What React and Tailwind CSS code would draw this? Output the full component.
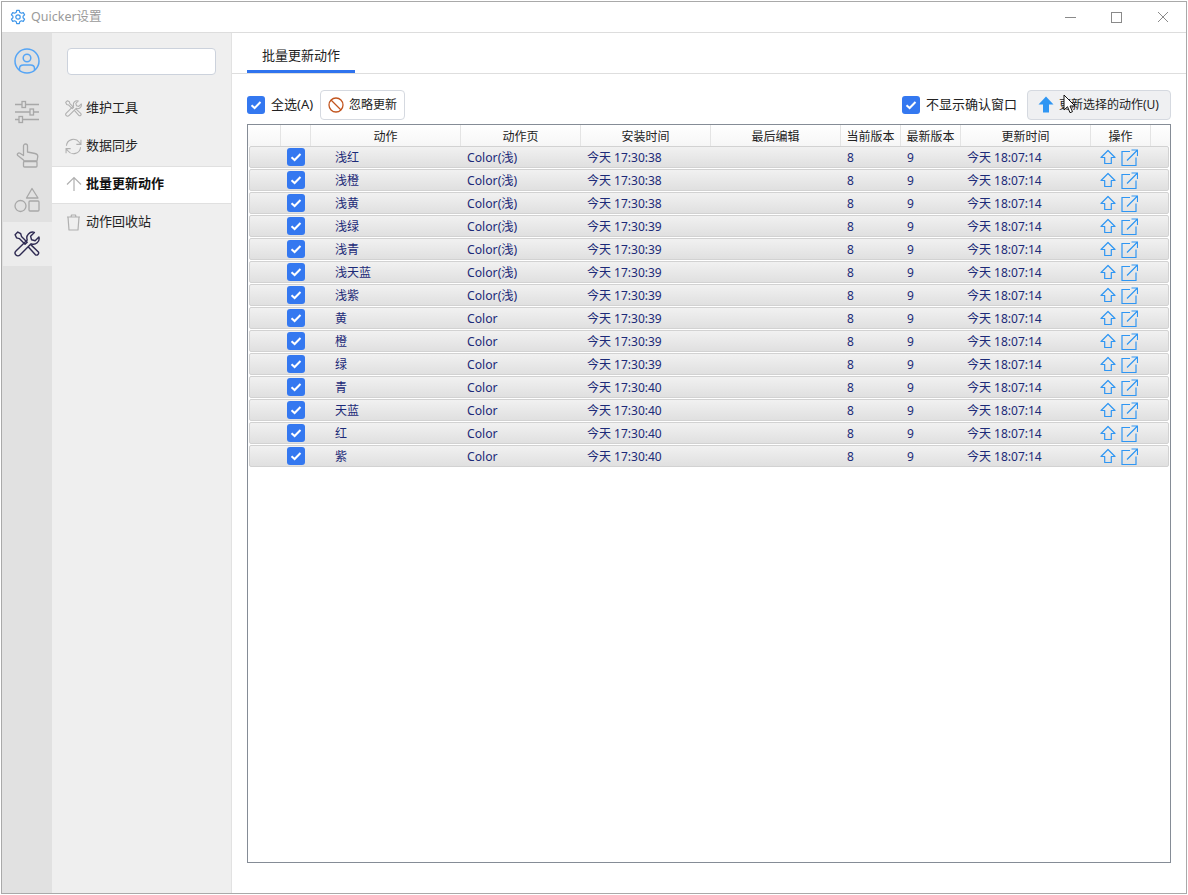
import React from "react";

const FONT = "font-['Noto_Sans','Noto_Sans_CJK_SC',sans-serif]";

const rows = [
  ["浅红", "Color(浅)", "今天 17:30:38"],
  ["浅橙", "Color(浅)", "今天 17:30:38"],
  ["浅黄", "Color(浅)", "今天 17:30:38"],
  ["浅绿", "Color(浅)", "今天 17:30:39"],
  ["浅青", "Color(浅)", "今天 17:30:39"],
  ["浅天蓝", "Color(浅)", "今天 17:30:39"],
  ["浅紫", "Color(浅)", "今天 17:30:39"],
  ["黄", "Color", "今天 17:30:39"],
  ["橙", "Color", "今天 17:30:39"],
  ["绿", "Color", "今天 17:30:39"],
  ["青", "Color", "今天 17:30:40"],
  ["天蓝", "Color", "今天 17:30:40"],
  ["红", "Color", "今天 17:30:40"],
  ["紫", "Color", "今天 17:30:40"],
];

const Check = () => (
  <span className="flex h-[18px] w-[18px] shrink-0 items-center justify-center rounded-[3px] bg-[#3478f0]">
    <svg width="12" height="10" viewBox="0 0 12 10" fill="none">
      <path d="M1.5 5.2 4.6 8 10.5 2" stroke="#fff" strokeWidth="2" />
    </svg>
  </span>
);

const Wrench = ({ color, size, w = 1.3 }) => (
  <svg width={size} height={size} viewBox="0 0 24 24" fill="none" stroke={color} strokeWidth={w} strokeLinejoin="round" strokeLinecap="round">
    <path d="M1 3.500 3.500 1l2.700 1.500.7 2.500 5.300 5.300-2 2-5.300-5.300-2.500-.7Z" />
    <path d="M23 5.500 19.500 9l-3.300-.9-.9-3.300L18.800 1.300a5.300 5.300 0 0 0-6.600 6.900L1.800 18.500a2.600 2.600 0 0 0 3.700 3.700l10.300-10.400a5.300 5.300 0 0 0 7.200-6.300Z" />
    <path d="m13.500 15 6.300 7a2 2 0 0 0 2.700-2.700l-6.800-6.500" />
  </svg>
);

const RailItem = ({ children, active, className = "" }) => (
  <div className={`flex h-[44px] items-center justify-center ${active ? "w-[49px] bg-[#ececec]" : "w-[50px]"} ${className}`}>{children}</div>
);

const NavItem = ({ icon, label, active }) => (
  <div className={`flex h-[38px] items-center pl-[11px] text-[13px] ${active ? "-mb-px mt-px border-y border-[#e0e0e0] bg-white pb-[2px] font-semibold text-[#111]" : "text-[#222]"}`}>
    <span className="flex w-[21px] justify-center">{icon}</span>
    <span className="ml-[2px]">{label}</span>
  </div>
);

const headers = [
  ["", "w-[33px]"],
  ["", "w-[30px]"],
  ["动作", "w-[150px]"],
  ["动作页", "w-[120px]"],
  ["安装时间", "w-[130px]"],
  ["最后编辑", "w-[130px]"],
  ["当前版本", "w-[60px]"],
  ["最新版本", "w-[60px]"],
  ["更新时间", "w-[130px]"],
  ["操作", "w-[60px]"],
];

const Row = ({ r }) => (
  <div className="flex h-[22px] items-center rounded-[2px] border border-[#d2d2d2] bg-gradient-to-b from-[#f1f1f1] to-[#e0e0e0] text-[12px] leading-none text-[#1c2a78]">
    <span className="w-[37px]" />
    <Check />
    <span className="ml-[30px] w-[132px] pt-[2px]">{r[0]}</span>
    <span className="w-[120px] pt-[2px] text-[12.2px]">{r[1]}</span>
    <span className="w-[260px] pt-[2px]">{r[2]}</span>
    <span className="w-[60px] pt-[2px]">8</span>
    <span className="w-[60px] pt-[2px]">9</span>
    <span className="w-[133px] pt-[2px]">今天 18:07:14</span>
    <span className="flex items-center gap-[5px]">
      <svg width="16" height="16" viewBox="0 0 16 16" fill="none" stroke="#2f96f3" strokeWidth="1.2" strokeLinejoin="round">
        <path d="M8 1.500 15 8.500h-3.700v6H4.700v-6H1Z" />
      </svg>
      <svg width="17" height="17" viewBox="0 0 17 17" fill="none" stroke="#2f96f3" strokeWidth="1.2">
        <path d="M9 2.500H1v14h14V8.500" />
        <path d="M6 11.500 16 1.500M10.500 1h6v6" />
      </svg>
    </span>
  </div>
);

export default function App() {
  return (
    <div className={`h-[895px] w-[1188px] overflow-hidden bg-white ${FONT}`}>
      <div className="ml-px mt-px flex h-[893px] w-[1186px] flex-col border border-[#a9a9a9] bg-white">
        <div className="flex h-[31px] shrink-0 items-center border-b border-[#dddddd] pl-[8px]">
          <svg width="16" height="16" viewBox="0 0 24 24" fill="none" stroke="#3f97ea" strokeWidth="1.8" strokeLinejoin="round">
            <path d="M10 2h4l.6 3 2.400 1.400 2.900-1 2 3.400-2.300 2v2.400l2.300 2-2 3.400-2.900-1-2.400 1.400-.6 3h-4l-.6-3L7 17.600l-2.900 1-2-3.400 2.300-2v-2.400l-2.300-2 2-3.400 2.900 1L9.400 5Z" />
            <circle cx="12" cy="12" r="3.300" />
          </svg>
          <span className="ml-[5px] text-[12.5px] text-[#9a9a9a]">Quicker设置</span>
          <div className="ml-auto flex items-center">
            <span className="mr-[35px] h-px w-[11px] bg-[#8a8a8a]" />
            <span className="mr-[35px] h-[11px] w-[11px] border border-[#8a8a8a]" />
            <svg className="mr-[17px]" width="12" height="12" viewBox="0 0 12 12" stroke="#8a8a8a" strokeWidth="1"><path d="M1 1l10 10M11 1 1 11" /></svg>
          </div>
        </div>

        <div className="flex min-h-0 flex-1">
          <div className="flex w-[50px] shrink-0 flex-col items-center bg-[#e1e1e1] pt-[6px]">
            <RailItem>
              <svg width="26" height="26" viewBox="0 0 26 26" fill="none" stroke="#56a5f5" strokeWidth="1.5">
                <circle cx="13" cy="13" r="12" />
                <circle cx="13" cy="10" r="3.800" />
                <path d="M5.500 22v-1.500c0-2.500 2-3.500 4-3.500h7c2 0 4 1 4 3.500V22" />
              </svg>
            </RailItem>
            <RailItem className="mt-[7px]">
              <svg width="26" height="24" viewBox="0 0 26 24" fill="none" stroke="#a8a8a8" strokeWidth="1.3">
                <path d="M1 4.500h24M1 12h24M1 19.500h24" />
                <rect x="8" y="1.500" width="3.500" height="6" fill="#e1e1e1" />
                <rect x="16" y="9" width="3.500" height="6" fill="#e1e1e1" />
                <rect x="5" y="16.500" width="3.500" height="6" fill="#e1e1e1" />
              </svg>
            </RailItem>
            <RailItem>
              <svg className="-mt-[2px]" width="23" height="25" viewBox="0 0 23 25" fill="none" stroke="#a8a8a8" strokeWidth="1.3" strokeLinejoin="round">
                <path d="M7.500 17 1.800 12.500c-1.300-1.500.7-3.300 2.200-2.300L7.500 12.500V3a2 2 0 0 1 4 0v6l7.500 1.500c1.800.4 3 1.700 2.700 3.500L21 18H8Z" />
                <rect x="7.500" y="18.500" width="13.500" height="5.500" rx="1" />
              </svg>
            </RailItem>
            <RailItem>
              <svg width="26" height="26" viewBox="0 0 26 26" fill="none" stroke="#a8a8a8" strokeWidth="1.3" strokeLinejoin="round">
                <path d="M18 1.500 24 11H12.500Z" />
                <circle cx="6.500" cy="19" r="5.500" />
                <rect x="15" y="14" width="10" height="10" rx="1" />
              </svg>
            </RailItem>
            <RailItem active>
              <Wrench color="#2e2a52" size={26} />
            </RailItem>
          </div>

          <div className="w-[180px] shrink-0 border-r border-[#e2e2e2] bg-[#efefef] pt-[15px]">
            <div className="ml-[15px] h-[27px] w-[149px] rounded-[4px] border border-[#ccd2dc] bg-white" />
            <div className="mt-[14px]">
              <NavItem label="维护工具" icon={<Wrench color="#b0b0b0" size={17} w={1.5} />} />
              <NavItem label="数据同步" icon={
                <svg width="17" height="17" viewBox="0 0 24 24" fill="none" stroke="#b0b0b0" strokeWidth="1.5">
                  <path d="M2 11A10 10 0 0 1 20 6l2.500 3M22.500 2.500V9H16M22 13A10 10 0 0 1 4 18l-2.500-3M1.500 21.500V15H8" />
                </svg>
              } />
              <NavItem active label="批量更新动作" icon={
                <svg width="16" height="16" viewBox="0 0 16 16" fill="none" stroke="#b0b0b0" strokeWidth="1.2"><path d="M8 15V1.500M1 8.500l7-7 7 7" /></svg>
              } />
              <NavItem label="动作回收站" icon={
                <svg width="15" height="17" viewBox="0 0 15 17" fill="none" stroke="#b0b0b0" strokeWidth="1.2" strokeLinejoin="round">
                  <path d="M1 3h13M5 3l.5-2h4l.5 2M2 3l1 13h9l1-13" />
                </svg>
              } />
            </div>
          </div>

          <div className="flex min-w-0 flex-1 flex-col">
            <div className="flex h-[41px] shrink-0 border-b border-[#dedede] pl-[15px]">
              <div className="flex h-[40px] w-[108px] items-center justify-center border-b-[3px] border-[#2f73ee] pt-[9px] text-[13px] text-[#222]">批量更新动作</div>
            </div>
            <div className="flex h-[50px] shrink-0 items-center px-[15px] pt-[11px] text-[13px] text-[#222]">
              <Check />
              <span className="ml-[6px]">全选(A)</span>
              <div className="ml-[7px] flex h-[30px] w-[85px] items-center justify-center gap-[5px] rounded-[4px] border border-[#d5d9e0] bg-white text-[12px]">
                <svg width="16" height="16" viewBox="0 0 16 16" fill="none" stroke="#c2551f" strokeWidth="1.3"><circle cx="8" cy="8" r="7" /><path d="M3 3l10 10" /></svg>
                忽略更新
              </div>
              <span className="ml-auto"><Check /></span>
              <span className="ml-[6px]">不显示确认窗口</span>
              <div className="relative ml-[10px] flex h-[30px] w-[144px] items-center rounded-[4px] border border-[#d5d9e0] bg-[#eff0f2] pl-[10px] text-[12px]">
                <svg width="16" height="17" viewBox="0 0 16 17"><path d="M8 .5 15.500 8.500H11V16.500H5V8.500H.5Z" fill="#2f96f3" /></svg>
                <span className="ml-[5px] whitespace-nowrap">更新选择的动作(U)</span>
                <svg className="absolute left-[35px] top-[3px]" width="13" height="20" viewBox="0 0 13 20"><path d="M1 1v15l3.500-3.300 2.500 6 2.500-1-2.500-5.700h5Z" fill="#fff" stroke="#111" strokeWidth="1" strokeLinejoin="round" /></svg>
              </div>
            </div>

            <div className="mx-[15px] flex h-[739px] shrink-0 flex-col border border-[#858c96]">
              <div className="flex h-[21px] shrink-0 bg-gradient-to-b from-white to-[#f6f6f6] text-[12px] leading-[23px] text-[#222]">
                {headers.map(([label, w], i) => (
                  <div key={i} className={`${w} shrink-0 border-r border-[#e4e4e4] text-center`}>{label}</div>
                ))}
              </div>
              <div className="flex flex-col gap-px px-px">
                {rows.map((r) => <Row key={r[0]} r={r} />)}
              </div>
            </div>
          </div>
        </div>
      </div>
    </div>
  );
}
